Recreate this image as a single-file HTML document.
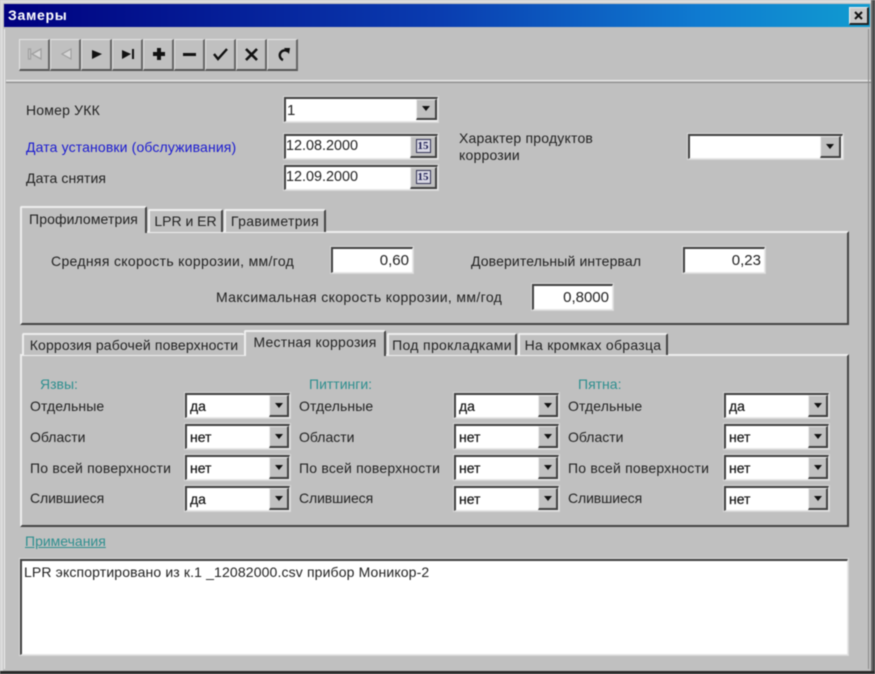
<!DOCTYPE html>
<html lang="ru"><head><meta charset="utf-8"><title>Замеры</title>
<style>
html,body{margin:0;padding:0;background:#c0c0c0}
#w{position:relative;width:875px;height:674px;overflow:hidden;background:#c0c0c0;font:14px "Liberation Sans",sans-serif;color:#222;filter:blur(.5px)}
#w div{position:absolute;box-sizing:border-box}
.t{white-space:nowrap;line-height:16px;height:16px}
.teal{color:#2f8f8f}
.b{background:#fff;border-top:2px solid #404040;border-left:2px solid #404040;border-right:1px solid #e8e8e8;border-bottom:1px solid #e8e8e8;outline:1px solid #d8d8d8;white-space:nowrap}
.c{padding:3px 0 0 3px;color:#111;-webkit-text-stroke:.2px #111}
.n{text-align:right;padding:3px 3px 0 0;font-size:15px}
.d{padding:2px 0 0 0;font-size:14.4px}
.ar{background:#c0c0c0;border-top:1px solid #eee;border-left:1px solid #eee;border-right:2px solid #404040;border-bottom:2px solid #404040}
.ar i{position:absolute;left:50%;top:50%;margin:-3px 0 0 -4px;border-left:4px solid transparent;border-right:4px solid transparent;border-top:5px solid #111}
.cal{font:bold 11px "Liberation Serif",serif;color:#1a1a50;text-align:center;line-height:18px}
.cal span{border:1px solid #335;padding:0 1px;background:#d8d8e4}
.btn{top:39px;width:31px;height:32px;background:#c0c0c0;border-top:1px solid #e4e4e4;border-left:1px solid #e4e4e4;border-right:2px solid #666;border-bottom:2px solid #555}
.btn svg{position:absolute;left:5px;top:5px}
.panel{background:#c0c0c0;border-top:2px solid #eee;border-left:2px solid #eee;border-right:2px solid #444;border-bottom:2px solid #444}
.tab{background:#c0c0c0;border-top:2px solid #eee;border-left:2px solid #eee;border-right:2px solid #444;text-align:center;white-space:nowrap;line-height:20px;border-radius:2px 2px 0 0}
.tab.on{z-index:2;line-height:22px}
</style></head><body>
<div id="w">
  <div style="left:0;top:0;width:875px;height:3px;background:#dcdcdc"></div>
  <div style="left:0;top:0;width:3px;height:674px;background:#dcdcdc"></div>
  <div style="left:871px;top:0;width:4px;height:674px;background:linear-gradient(90deg,#777,#333)"></div>
  <div style="left:0;top:671px;width:875px;height:3px;background:#2a2a2a"></div>
  <div style="left:4px;top:4px;width:866px;height:23px;background:linear-gradient(90deg,#00007f 0%,#0a3cb0 50%,#0f7ad0 80%,#119cd0 100%)"></div>
  <div class="t" style="left:8px;top:7px;color:#fff;font-weight:bold;letter-spacing:.7px">Замеры</div>
  <div style="left:849px;top:7px;width:20px;height:18px;background:#c8c8c8;border-top:1px solid #eee;border-left:1px solid #eee;border-right:2px solid #222;border-bottom:2px solid #222">
    <svg width="17" height="15" style="position:absolute;left:0;top:0"><path d="M5 4L12 11M12 4L5 11" stroke="#111" stroke-width="2"/></svg>
  </div>
  <div style="left:4px;top:29px;width:1px;height:640px;background:#eee"></div>
  <div style="left:6px;top:80px;width:865px;height:1px;background:#eee"></div>
  <div style="left:6px;top:82px;width:865px;height:1px;background:#888"></div>
  <div style="left:868px;top:29px;width:1px;height:640px;background:#8a8a8a"></div>

  <!-- toolbar -->
  <div class="btn" style="left:19px"><svg width="20" height="18"><path d="M3.500 4v10h2V4zM16 4L7 9l9 5z" fill="#d8d8d8" stroke="#a0a0a0" stroke-width="1.300"/></svg></div>
  <div class="btn" style="left:50px"><svg width="20" height="18"><path d="M15 4L6 9l9 5z" fill="#d8d8d8" stroke="#a0a0a0" stroke-width="1.2"/></svg></div>
  <div class="btn" style="left:81px"><svg width="20" height="18"><path d="M5 5l10 4-10 5z" fill="#111"/></svg></div>
  <div class="btn" style="left:112px"><svg width="20" height="18"><path d="M4 5l9 4-9 5zM14 4h2v10h-2z" fill="#111"/></svg></div>
  <div class="btn" style="left:143px"><svg width="20" height="18"><path d="M8 3h4v4h4v4h-4v4H8v-4H4V7h4z" fill="#111"/></svg></div>
  <div class="btn" style="left:174px"><svg width="20" height="18"><path d="M3 8h13v3H3z" fill="#111"/></svg></div>
  <div class="btn" style="left:205px"><svg width="20" height="18"><path d="M3 9l4 5 9-10" fill="none" stroke="#111" stroke-width="2.4"/></svg></div>
  <div class="btn" style="left:236px"><svg width="20" height="18"><path d="M4 4l11 11M15 4L4 15" stroke="#111" stroke-width="2.6"/></svg></div>
  <div class="btn" style="left:267px"><svg width="20" height="18"><path d="M15 6.500A5 5 0 1 0 10 15" fill="none" stroke="#111" stroke-width="2.400"/><path d="M11 3h6l-1 6z" fill="#111"/></svg></div>

  <!-- top fields -->
  <div class="t" style="left:26px;top:102px;letter-spacing:.2px">Номер УКК</div>
  <div class="t" style="left:26px;top:139px;color:#1a1ad0;letter-spacing:.14px">Дата установки (обслуживания)</div>
  <div class="t" style="left:26px;top:170px;letter-spacing:.1px">Дата снятия</div>
  <div class="b" style="left:284px;top:97px;width:154px;height:25px;padding:3px 0 0 1px;font-size:15px">1</div>
  <div class="ar" style="left:416px;top:99px;width:21px;height:21px"><i></i></div>
  <div class="b d" style="left:284px;top:134px;width:154px;height:25px">12.08.2000</div>
  <div class="ar cal" style="left:410px;top:136px;width:27px;height:22px"><span>15</span></div>
  <div class="b d" style="left:284px;top:165px;width:154px;height:25px">12.09.2000</div>
  <div class="ar cal" style="left:410px;top:167px;width:27px;height:22px"><span>15</span></div>
  <div class="t" style="left:459px;top:130px;letter-spacing:.2px">Характер продуктов</div>
  <div class="t" style="left:459px;top:147px;letter-spacing:.2px">коррозии</div>
  <div class="b" style="left:688px;top:134px;width:155px;height:25px"></div>
  <div class="ar" style="left:820px;top:136px;width:21px;height:22px"><i></i></div>

  <!-- tabs 1 -->
  <div class="panel" style="left:20px;top:231px;width:829px;height:94px"></div>
  <div class="tab on" style="left:20px;top:206px;width:127px;height:27px;letter-spacing:.1px">Профилометрия</div>
  <div class="tab" style="left:148px;top:209px;width:75px;height:23px">LPR и ER</div>
  <div class="tab" style="left:224px;top:209px;width:102px;height:23px;letter-spacing:.36px">Гравиметрия</div>
  <div class="t" style="left:51px;top:253px;letter-spacing:.33px">Средняя скорость коррозии, мм/год</div>
  <div class="b n" style="left:331px;top:247px;width:82px;height:26px">0,60</div>
  <div class="t" style="left:471px;top:253px;letter-spacing:.13px">Доверительный интервал</div>
  <div class="b n" style="left:683px;top:247px;width:82px;height:26px">0,23</div>
  <div class="t" style="left:216px;top:289px;letter-spacing:.36px">Максимальная скорость коррозии, мм/год</div>
  <div class="b n" style="left:532px;top:284px;width:81px;height:26px">0,8000</div>

  <!-- tabs 2 -->
  <div class="panel" style="left:20px;top:354px;width:829px;height:173px"></div>
  <div class="tab" style="left:22px;top:333px;width:222px;height:22px;border-right:0;letter-spacing:.14px">Коррозия рабочей поверхности</div>
  <div class="tab on" style="left:244px;top:330px;width:142px;height:26px;line-height:21px;letter-spacing:.25px">Местная коррозия</div>
  <div class="tab" style="left:387px;top:333px;width:130px;height:22px;letter-spacing:.33px">Под прокладками</div>
  <div class="tab" style="left:518px;top:333px;width:150px;height:22px;letter-spacing:.28px">На кромках образца</div>

  <div class="t teal" style="left:40px;top:376px">Язвы:</div>
  <div class="t teal" style="left:309px;top:376px">Питтинги:</div>
  <div class="t teal" style="left:578px;top:376px">Пятна:</div>

  <div class="t" style="left:30px;top:398px;letter-spacing:.1px">Отдельные</div>
  <div class="t" style="left:30px;top:429px">Области</div>
  <div class="t" style="left:30px;top:460px;letter-spacing:.2px">По всей поверхности</div>
  <div class="t" style="left:30px;top:490px;letter-spacing:-.1px">Слившиеся</div>
  <div class="t" style="left:299px;top:398px;letter-spacing:.1px">Отдельные</div>
  <div class="t" style="left:299px;top:429px">Области</div>
  <div class="t" style="left:299px;top:460px;letter-spacing:.2px">По всей поверхности</div>
  <div class="t" style="left:299px;top:490px;letter-spacing:-.1px">Слившиеся</div>
  <div class="t" style="left:568px;top:398px;letter-spacing:.1px">Отдельные</div>
  <div class="t" style="left:568px;top:429px">Области</div>
  <div class="t" style="left:568px;top:460px;letter-spacing:.2px">По всей поверхности</div>
  <div class="t" style="left:568px;top:490px;letter-spacing:-.1px">Слившиеся</div>

  <div class="b c" style="left:185px;top:393px;width:105px;height:25px">да</div><div class="ar" style="left:269px;top:395px;width:20px;height:22px"><i></i></div>
  <div class="b c" style="left:185px;top:424px;width:105px;height:25px">нет</div><div class="ar" style="left:269px;top:426px;width:20px;height:22px"><i></i></div>
  <div class="b c" style="left:185px;top:455px;width:105px;height:25px">нет</div><div class="ar" style="left:269px;top:457px;width:20px;height:22px"><i></i></div>
  <div class="b c" style="left:185px;top:486px;width:105px;height:25px">да</div><div class="ar" style="left:269px;top:488px;width:20px;height:22px"><i></i></div>

  <div class="b c" style="left:454px;top:393px;width:105px;height:25px">да</div><div class="ar" style="left:538px;top:395px;width:20px;height:22px"><i></i></div>
  <div class="b c" style="left:454px;top:424px;width:105px;height:25px">нет</div><div class="ar" style="left:538px;top:426px;width:20px;height:22px"><i></i></div>
  <div class="b c" style="left:454px;top:455px;width:105px;height:25px">нет</div><div class="ar" style="left:538px;top:457px;width:20px;height:22px"><i></i></div>
  <div class="b c" style="left:454px;top:486px;width:105px;height:25px">нет</div><div class="ar" style="left:538px;top:488px;width:20px;height:22px"><i></i></div>

  <div class="b c" style="left:724px;top:393px;width:105px;height:25px">да</div><div class="ar" style="left:808px;top:395px;width:20px;height:22px"><i></i></div>
  <div class="b c" style="left:724px;top:424px;width:105px;height:25px">нет</div><div class="ar" style="left:808px;top:426px;width:20px;height:22px"><i></i></div>
  <div class="b c" style="left:724px;top:455px;width:105px;height:25px">нет</div><div class="ar" style="left:808px;top:457px;width:20px;height:22px"><i></i></div>
  <div class="b c" style="left:724px;top:486px;width:105px;height:25px">нет</div><div class="ar" style="left:808px;top:488px;width:20px;height:22px"><i></i></div>

  <div class="t teal" style="left:25px;top:533px;text-decoration:underline">Примечания</div>
  <div class="b" style="left:20px;top:559px;width:828px;height:96px;padding:3px 0 0 2px;letter-spacing:.14px">LPR экспортировано из к.1 _12082000.csv прибор Моникор-2</div>
</div>
</body></html>
